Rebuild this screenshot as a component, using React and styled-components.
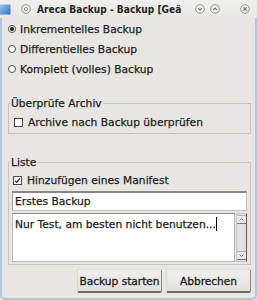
import React from 'react';
import styled, { createGlobalStyle } from 'styled-components';

const Global = createGlobalStyle`
  html, body { margin: 0; padding: 0; background: #e8e6e2; }
  body { font-family: "DejaVu Sans", "Noto Sans", sans-serif; }
`;

const Window = styled.div`
  width: 257px;
  height: 300px;
  display: flex;
  flex-direction: column;
  background: #e8e6e2;
  color: #1e1e1e;
  font-size: 10.7px;
  overflow: hidden;
  -webkit-text-stroke: 0.25px #1e1e1e;
`;

const TitleBar = styled.div`
  height: 18px;
  flex: none;
  display: flex;
  align-items: center;
  background: linear-gradient(#efefed, #e8e7e4);
`;

const TitleText = styled.div`
  flex: 1;
  min-width: 0;
  margin-left: 6px;
  font-family: "DejaVu Sans Condensed", "DejaVu Sans", sans-serif;
  font-stretch: condensed;
  font-weight: bold;
  font-size: 10.1px;
  color: #262626;
  -webkit-text-stroke: 0;
  white-space: nowrap;
  overflow: hidden;
`;

const TitleButton = styled.svg`
  flex: none;
  width: 10px;
  height: 10px;
  margin-left: ${(p) => p.$ml || 0}px;
`;

const Frame = styled.div`
  flex: 1;
  display: flex;
  flex-direction: column;
  border: 2px solid #b0c6de;
  border-top: none;
  border-radius: 0 0 5px 5px;
  padding: 1px 4px 0 4px;
`;

const OptionRow = styled.label`
  height: 20px;
  display: flex;
  align-items: center;
  gap: 4px;
  padding-left: ${(p) => p.$pl || 0}px;
  white-space: nowrap;
`;

const Radio = styled.span`
  width: 8px;
  height: 8px;
  box-sizing: border-box;
  border-radius: 50%;
  border: 1px solid #4a4a4a;
  background: #fff;
  display: flex;
  align-items: center;
  justify-content: center;
  &::after {
    content: '';
    width: 4px;
    height: 4px;
    border-radius: 50%;
    background: ${(p) => (p.$on ? '#1a1a1a' : 'transparent')};
  }
`;

const Check = styled.span`
  width: 9px;
  height: 9px;
  box-sizing: border-box;
  border: 1px solid #4a4a4a;
  background: #fff;
  display: flex;
  align-items: center;
  justify-content: center;
  margin-right: 1px;
`;

const Group = styled.fieldset`
  margin: ${(p) => p.$mt}px 0 0 2px;
  padding: ${(p) => p.$pt}px 3px ${(p) => p.$pb}px 3px;
  border: 1px solid #c6c3be;
  min-width: 0;
  display: flex;
  flex-direction: column;
`;

const Legend = styled.legend`
  padding: 0 1px;
  margin-left: -2px;
  line-height: 13px;
  font-size: 10.7px;
  color: #1e1e1e;
`;

const LineEdit = styled.div`
  height: 20px;
  box-sizing: border-box;
  background: #fff;
  border: 1px solid #c4c1bc;
  border-top: 2px solid #8a8783;
  border-left-color: #a7a4a0;
  display: flex;
  align-items: center;
  padding-left: 2px;
  margin-top: 1px;
  white-space: nowrap;
`;

const TextBox = styled.div`
  height: 49px;
  margin-top: 2px;
  display: flex;
  gap: 1px;
`;

const TextArea = styled.div`
  flex: 1;
  background: #fff;
  border: 1px solid #bdbab5;
  border-top-color: #8e8b87;
  padding: 3px 2px;
  white-space: nowrap;
  overflow: hidden;
  line-height: 13px;
`;

const Caret = styled.span`
  display: inline-block;
  width: 0;
  height: 14px;
  border-left: 1px solid #000;
  vertical-align: -3px;
`;

const ScrollBar = styled.div`
  width: 11px;
  box-sizing: border-box;
  display: flex;
  flex-direction: column;
  background: #e3e1dd;
  border: 1px solid #c9c6c1;
  border-right: 1px solid #5d5b58;
  padding: 1px 0;
`;

const ScrollArrow = styled.div`
  height: 9px;
  box-sizing: border-box;
  border-top: 1px solid #b5b2ad;
  border-bottom: 1px solid #7e7b77;
  background: #ebe9e6;
  display: flex;
  align-items: center;
  justify-content: center;
`;

const ScrollTrack = styled.div`
  flex: 1;
`;

const ButtonRow = styled.div`
  margin-top: 4px;
  display: flex;
  justify-content: flex-end;
  gap: 4px;
`;

const Button = styled.button`
  width: 85px;
  height: 24px;
  box-sizing: border-box;
  font-family: inherit;
  font-size: 10.6px;
  color: #1c1c1c;
  -webkit-text-stroke: 0.3px #1c1c1c;
  background: linear-gradient(#f0efed, #e3e1dd);
  border: 1px solid #dcd9d5;
  border-right-color: #8f8c88;
  border-bottom: 2px solid #6f6c68;
  border-radius: 2px;
  padding: 0;
  white-space: nowrap;
`;

const AppIcon = styled.svg`
  flex: none;
  width: 11px;
  height: 11px;
`;

function CircleBtn({ kind, ml }) {
  return (
    <TitleButton $ml={ml} viewBox="0 0 10 10">
      <defs>
        <radialGradient id={`g${kind}`} cx="50%" cy="40%" r="60%">
          <stop offset="0" stopColor="#fbfbfb" />
          <stop offset="1" stopColor="#d8d8d8" />
        </radialGradient>
      </defs>
      <circle cx="5" cy="5" r="4.4" fill={`url(#g${kind})`} stroke="#9a9a9a" strokeWidth="0.9" />
      {kind === 'menu' && <circle cx="5" cy="5" r="1.6" fill="none" stroke="#8a8a8a" strokeWidth="0.9" />}
      {kind === 'down' && <path d="M3.2 4.2 L5 6 L6.8 4.2" fill="none" stroke="#6f6f6f" strokeWidth="1.1" />}
      {kind === 'up' && <path d="M3.2 5.8 L5 4 L6.8 5.8" fill="none" stroke="#6f6f6f" strokeWidth="1.1" />}
      {kind === 'close' && (
        <path d="M3.4 3.4 L6.6 6.6 M6.6 3.4 L3.4 6.6" fill="none" stroke="#6f6f6f" strokeWidth="1.2" />
      )}
    </TitleButton>
  );
}

function CheckMark() {
  return (
    <svg width="7" height="7" viewBox="0 0 7 7">
      <path d="M1 3.6 L2.8 5.4 L6 1.4" fill="none" stroke="#1a1a1a" strokeWidth="1.1" />
    </svg>
  );
}

export default function App() {
  return (
    <>
      <Global />
      <Window>
        <TitleBar>
          <AppIcon viewBox="0 0 11 11">
            <defs>
              <linearGradient id="ai" x1="0" y1="0" x2="1" y2="1">
                <stop offset="0" stopColor="#9cc4ee" />
                <stop offset="1" stopColor="#2d6fc4" />
              </linearGradient>
            </defs>
            <rect x="0" y="0.5" width="10.5" height="10" fill="url(#ai)" />
          </AppIcon>
          <CircleBtn kind="menu" ml={10} />
          <TitleText>Areca Backup - Backup [Geä</TitleText>
          <CircleBtn kind="down" ml={4} />
          <CircleBtn kind="up" ml={5} />
          <CircleBtn kind="close" ml={20} />
          <span style={{ width: 7, flex: 'none' }} />
        </TitleBar>
        <Frame>
          <OptionRow $pl={2}>
            <Radio $on />
            Inkrementelles Backup
          </OptionRow>
          <OptionRow $pl={2}>
            <Radio />
            Differentielles Backup
          </OptionRow>
          <OptionRow $pl={2}>
            <Radio />
            Komplett (volles) Backup
          </OptionRow>

          <Group $mt={18} $pt={2} $pb={1}>
            <Legend>Überprüfe Archiv</Legend>
            <OptionRow $pl={2}>
              <Check />
              Archive nach Backup überprüfen
            </OptionRow>
          </Group>

          <Group $mt={22} $pt={1} $pb={2}>
            <Legend>Liste</Legend>
            <OptionRow $pl={1}>
              <Check>
                <CheckMark />
              </Check>
              Hinzufügen eines Manifest
            </OptionRow>
            <LineEdit>Erstes Backup</LineEdit>
            <TextBox>
              <TextArea>
                Nur Test, am besten nicht benutzen...
                <Caret />
              </TextArea>
              <ScrollBar>
                <ScrollArrow>
                  <svg width="5" height="3" viewBox="0 0 5 3">
                    <path d="M0.5 2.5 L2.5 0.5 L4.5 2.5" fill="none" stroke="#5a5a5a" strokeWidth="0.8" />
                  </svg>
                </ScrollArrow>
                <ScrollTrack />
                <ScrollArrow>
                  <svg width="5" height="3" viewBox="0 0 5 3">
                    <path d="M0.5 0.5 L2.5 2.5 L4.5 0.5" fill="none" stroke="#5a5a5a" strokeWidth="0.8" />
                  </svg>
                </ScrollArrow>
              </ScrollBar>
            </TextBox>
          </Group>

          <ButtonRow>
            <Button>Backup starten</Button>
            <Button>Abbrechen</Button>
          </ButtonRow>
        </Frame>
      </Window>
    </>
  );
}
